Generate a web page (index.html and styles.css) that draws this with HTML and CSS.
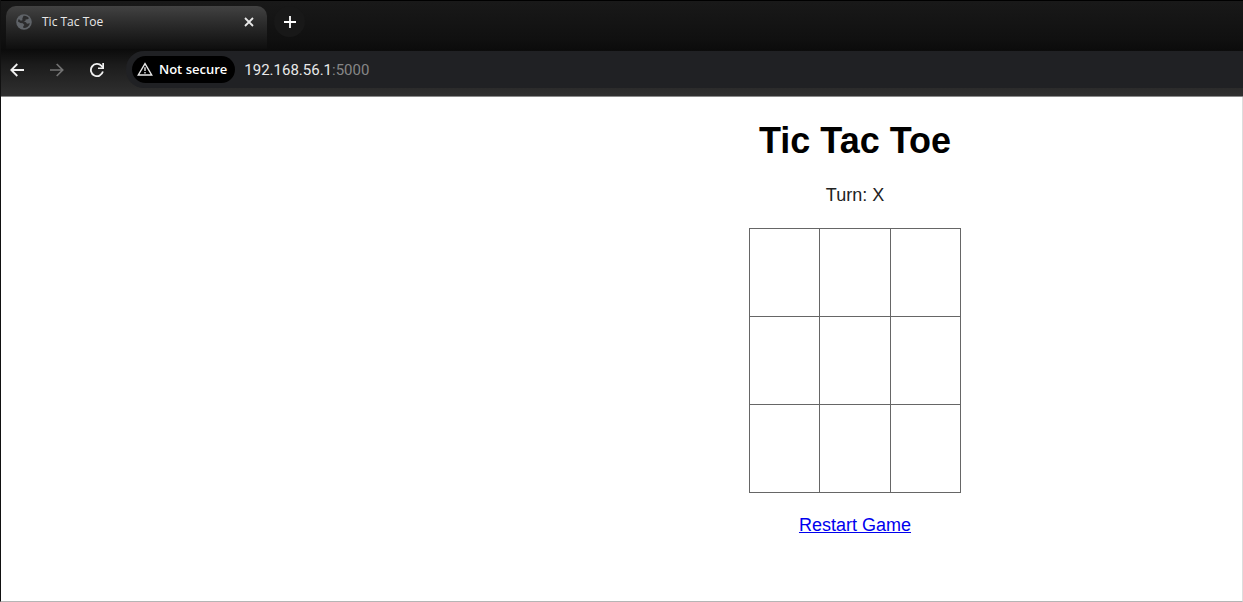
FILE: index.html
```html
<!DOCTYPE html>
<html lang="en">
<head>
<meta charset="utf-8">
<title>Tic Tac Toe</title>
<link rel="stylesheet" href="styles.css">
</head>
<body>
<div class="window">
  <header class="chrome">
    <div class="tab-strip">
      <div class="tab">
        <svg class="icon" width="16" height="16" viewBox="0 0 16 16" aria-hidden="true">
          <circle cx="8" cy="8" r="7.8" fill="#5f6368"/>
          <path d="M7.6 1.8C10 1.6 12 2.6 13 4.2L11.6 5.2 9.6 5.4 9.4 7 7.6 7.4 10 8.2 11 9.8 13.9 9.2C13.2 12.4 10.6 14.2 7.4 14L7.2 12.3 8.4 11 6.8 9.2 4.4 9 1.9 7.6C2 6.6 2.3 5.6 2.8 4.9L4.8 6.8 6.4 6.2 6.4 4.2Z" fill="#2c2c2d"/>
        </svg>
        <span class="tab-title">Tic Tac Toe</span>
        <button class="icon-button close" aria-label="Close tab">
          <svg width="10" height="10" viewBox="0 0 10 10"><path d="M1 1 9 9M9 1 1 9" stroke="#e8e8e8" stroke-width="1.8"/></svg>
        </button>
      </div>
      <button class="icon-button new-tab" aria-label="New tab">
        <svg width="12" height="12" viewBox="0 0 12 12"><path d="M6 0V12M0 6H12" stroke="#fff" stroke-width="1.8"/></svg>
      </button>
    </div>
    <div class="toolbar">
      <nav class="nav">
        <button class="icon-button" aria-label="Back">
          <svg width="14" height="14" viewBox="0 0 14 14"><path d="M14 7H1.5M7.3 1 1.3 7 7.3 13" fill="none" stroke="#f1f1f1" stroke-width="1.8"/></svg>
        </button>
        <button class="icon-button" aria-label="Forward">
          <svg width="14" height="14" viewBox="0 0 14 14"><path d="M0 7H12.5M6.7 1 12.7 7 6.7 13" fill="none" stroke="#737373" stroke-width="1.7"/></svg>
        </button>
        <button class="icon-button" aria-label="Reload">
          <svg width="14" height="14" viewBox="0 0 14 14"><path d="M12.9 8.6A6.1 6.1 0 1 1 11.5 2.9L13 4.6" fill="none" stroke="#f1f1f1" stroke-width="1.8"/><path d="M14 0V6H8V4.4H12.3V0Z" fill="#f1f1f1"/></svg>
        </button>
      </nav>
      <div class="address">
        <button class="security">
          <svg width="16" height="14" viewBox="0 0 16 14" aria-hidden="true"><path d="M8 1.6 14.7 13H1.3Z" fill="none" stroke="#e8e8e8" stroke-width="1.4"/><path d="M8 5.2V9M8 10V11.5" stroke="#e8e8e8" stroke-width="1.4"/></svg>
          Not secure
        </button>
        <span class="url">192.168.56.1<span class="port">:5000</span></span>
      </div>
    </div>
  </header>
  <main class="page">
    <h1 class="title">Tic Tac Toe</h1>
    <p class="turn">Turn: X</p>
    <table class="board" aria-label="Board">
      <tr><td></td><td></td><td></td></tr>
      <tr><td></td><td></td><td></td></tr>
      <tr><td></td><td></td><td></td></tr>
    </table>
    <a class="restart" href="#">Restart Game</a>
  </main>
</div>
</body>
</html>
```
FILE: styles.css
```css
* { box-sizing: border-box; }

body {
  margin: 0;
  background: #fff;
  font-family: "Liberation Sans", Arial, sans-serif;
}

.window {
  display: flex;
  flex-direction: column;
  min-height: 100vh;
  border-left: 1px solid #111;
  border-right: 1px solid #ddd;
  border-bottom: 1px solid #b5b5b5;
}

.chrome {
  margin-right: -1px;
  color: #e8e8e8;
  font-family: "Open Sans", "Noto Sans", sans-serif;
  border-bottom: 1px solid #8a8a8a;
}

.icon-button {
  display: flex;
  align-items: center;
  justify-content: center;
  padding: 0;
  border: 0;
  background: none;
}

.tab-strip {
  display: flex;
  align-items: flex-start;
  gap: 7px;
  height: 49px;
  padding: 5px 5px 0;
  border-top: 1px solid #000;
  background: linear-gradient(#191919, #101010 80%, #0c0c0c);
}

.tab {
  display: flex;
  align-items: center;
  width: 261px;
  height: 43px;
  padding: 0 13px 12px 10px;
  border-radius: 10px 10px 0 0;
  background: linear-gradient(#424242, #2c2c2c 40%, #0e0e0e);
}

.tab-title {
  flex: 1;
  margin-left: 10px;
  font-size: 12px;
  line-height: 16px;
}

.new-tab {
  width: 31px;
  height: 31px;
  border-radius: 50%;
  background: #181818;
}

.toolbar {
  display: flex;
  height: 47px;
  padding: 2px 0 8px 9px;
  gap: 22px;
  background: linear-gradient(#0b0b0b, #1c1c1c 35%, #303030);
}

.nav {
  display: flex;
  align-items: center;
  gap: 26px;
}

.address {
  flex: 1;
  display: flex;
  align-items: center;
  gap: 9px;
  padding-left: 6px;
  border-radius: 18px 0 0 18px;
  background: #202124;
}

.security {
  display: flex;
  align-items: center;
  gap: 6px;
  height: 27px;
  padding: 0 8px 1px 5px;
  border: 0;
  border-radius: 14px;
  background: #000;
  color: #fff;
  font-family: inherit;
  font-size: 13px;
  font-weight: 600;
  white-space: nowrap;
}

.url {
  font-family: Roboto, "Open Sans", sans-serif;
  font-size: 15px;
  line-height: 20px;
}

.port { color: #868686; }

.page {
  flex: 1;
  display: flex;
  flex-direction: column;
  align-items: center;
  padding: 24px 0 24px 467px;
}

.title {
  margin: 0;
  color: #000;
  font-size: 36px;
  line-height: 40px;
}

.turn {
  margin: 24px 0 23px;
  color: #222;
  font-size: 18px;
  line-height: 20px;
}

.board {
  width: 212px;
  border-collapse: collapse;
}

.board td {
  height: 88px;
  padding: 0;
  border: 1px solid #666;
}

.restart {
  margin-top: 22px;
  color: #00e;
  font-size: 18px;
  line-height: 20px;
}
```
